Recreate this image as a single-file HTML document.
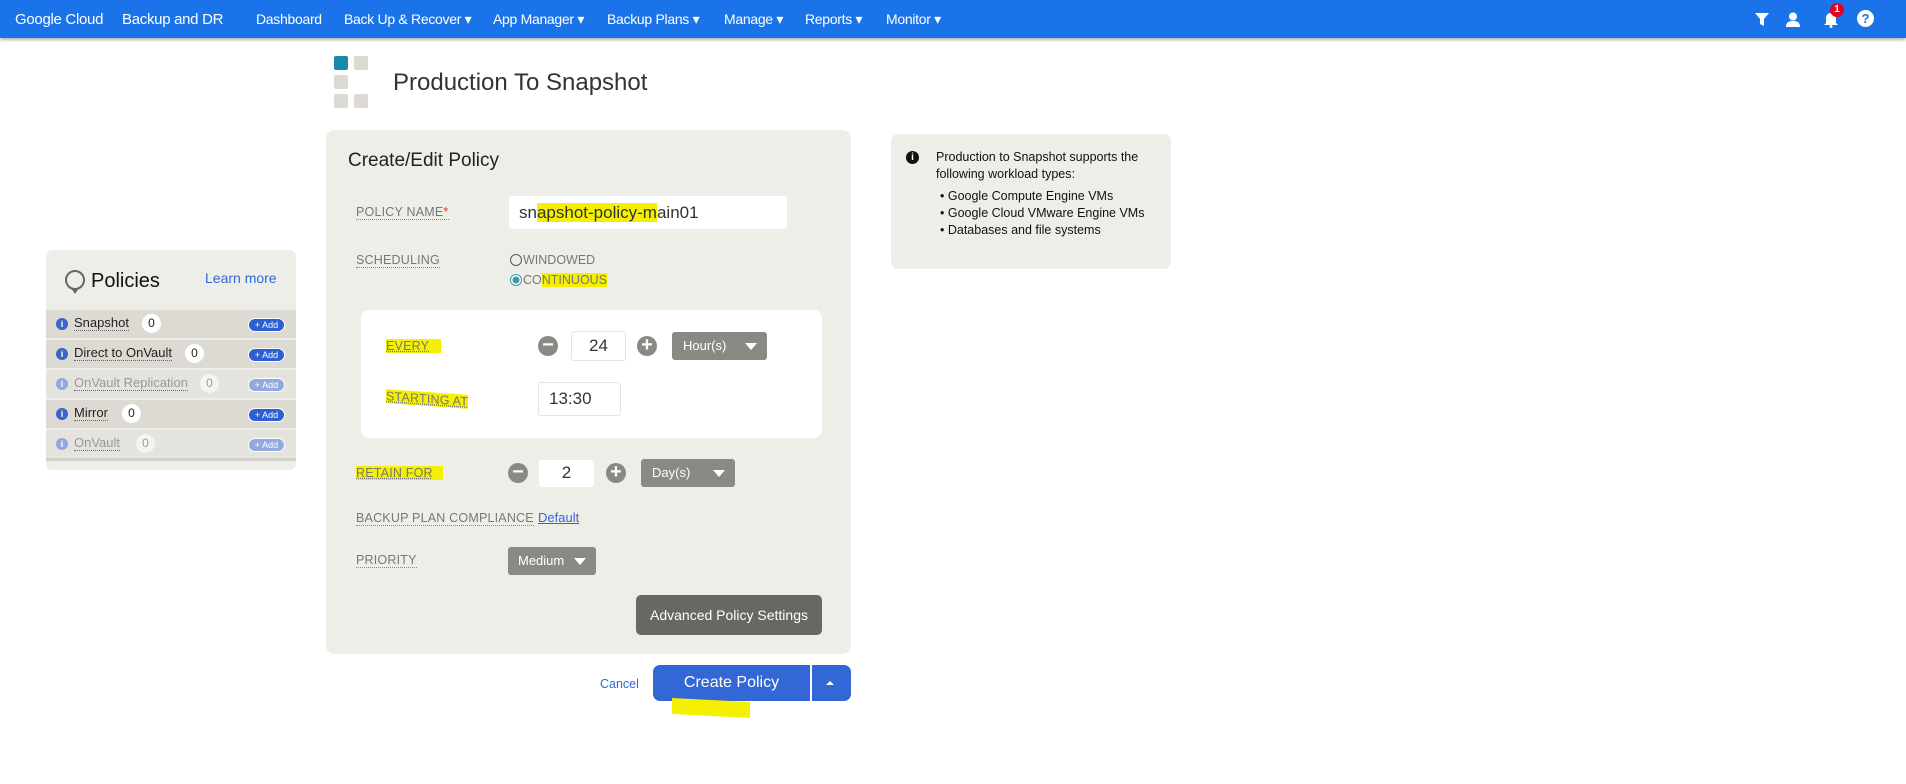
<!DOCTYPE html>
<html><head><meta charset="utf-8"><style>
*{box-sizing:border-box;margin:0;padding:0}
body{width:1906px;height:784px;background:#fff;font-family:"Liberation Sans",sans-serif;position:relative;overflow:hidden;color:#222}
.abs{position:absolute}
.nav{position:absolute;left:0;top:0;width:1906px;height:38px;background:#1a73e8;box-shadow:0 2px 3px rgba(0,0,0,.3)}
.nav span{position:absolute;top:11px;color:#fff;font-size:14px;white-space:nowrap;letter-spacing:-0.3px}
.lbl{position:absolute;font-size:12.5px;color:#777;border-bottom:1px dotted #888;line-height:14px;letter-spacing:.2px}
.hl{background:#f4f000;color:#777}
.sel{position:absolute;background:#8a8a84;color:#fff;font-size:13px;border-radius:3px;padding-left:11px}
.sel:after{content:"";position:absolute;right:10px;top:50%;margin-top:-3px;border-left:6px solid transparent;border-right:6px solid transparent;border-top:7px solid #fff}
.inp{position:absolute;background:#fff;border:1px solid #e4e4e0;border-radius:3px;font-size:17px;color:#333;text-align:center}
.circ{position:absolute;width:20px;height:20px;border-radius:50%;background:#8a8a84;color:#fff;font-size:20px;line-height:19px;text-align:center;font-weight:bold}
.row{position:absolute;left:46px;width:250px;height:28px;font-size:13px}
.row .i{position:absolute;left:10px;top:8px;width:12px;height:12px;border-radius:50%;background:#3a64c8;color:#fff;font-size:9px;text-align:center;line-height:12px;font-weight:bold}
.row .t{position:absolute;left:28px;top:6px;border-bottom:1px dotted #666;line-height:14px}
.row .c{position:absolute;top:4px;width:19px;height:19px;border-radius:50%;background:#fff;text-align:center;line-height:19px;font-size:12px}
.row .a{position:absolute;left:202px;top:8px;width:37px;height:14px;border-radius:7px;background:#2d5fd0;color:#fff;font-size:9px;text-align:center;line-height:13px;border:1px solid #fff}
.dis{color:#999}.dis .i,.dis .a{background:#93a8dc}
</style></head><body>
<div class="nav">
<span style="left:15px;font-size:15px">Google Cloud</span>
<span style="left:122px;font-size:15px">Backup and DR</span>
<span style="left:256px">Dashboard</span>
<span style="left:344px">Back Up &amp; Recover ▾</span>
<span style="left:493px">App Manager ▾</span>
<span style="left:607px">Backup Plans ▾</span>
<span style="left:724px">Manage ▾</span>
<span style="left:805px">Reports ▾</span>
<span style="left:886px">Monitor ▾</span>
<svg class="abs" style="left:1754px;top:12px" width="16" height="15"><path d="M1 1h14l-5 6v7l-4-2V7z" fill="#fff"/></svg>
<svg class="abs" style="left:1785px;top:12px" width="16" height="15"><circle cx="8" cy="4.5" r="4" fill="#fff"/><path d="M1 15c0-5 3-6 7-6s7 1 7 6z" fill="#fff"/></svg>
<svg class="abs" style="left:1823px;top:12px" width="16" height="16"><path d="M8 1c3 0 5 2 5 5v5l2 2H1l2-2V6c0-3 2-5 5-5z" fill="#fff"/><circle cx="8" cy="14.5" r="1.5" fill="#fff"/></svg>
<div class="abs" style="left:1830px;top:3px;width:14px;height:14px;border-radius:50%;background:#e8001c;color:#fff;font-size:10px;font-weight:bold;text-align:center;line-height:14px">1</div>
<div class="abs" style="left:1857px;top:10px;width:17px;height:17px;border-radius:50%;background:#fff;color:#1a73e8;font-size:13px;font-weight:bold;text-align:center;line-height:17px">?</div>
</div>

<div class="abs" style="left:334px;top:56px;width:14px;height:14px;background:#168aa6;border-radius:2px"></div>
<div class="abs" style="left:354px;top:56px;width:14px;height:14px;background:#dcdad3;border-radius:2px"></div>
<div class="abs" style="left:334px;top:75px;width:14px;height:14px;background:#dcdad3;border-radius:2px"></div>
<div class="abs" style="left:334px;top:94px;width:14px;height:14px;background:#dcdad3;border-radius:2px"></div>
<div class="abs" style="left:354px;top:94px;width:14px;height:14px;background:#dcdad3;border-radius:2px"></div>
<div class="abs" style="left:393px;top:69px;font-size:24px;color:#333">Production To Snapshot</div>

<div class="abs" style="left:46px;top:250px;width:250px;height:220px;background:#eeeee9;border-radius:6px"></div>
<svg class="abs" style="left:64px;top:270px" width="22" height="26"><circle cx="11" cy="10" r="9" fill="none" stroke="#666" stroke-width="2"/><path d="M7 18l4 6 4-6" fill="#666"/></svg>
<div class="abs" style="left:91px;top:270px;font-size:20px;color:#111">Policies</div>
<div class="abs" style="left:205px;top:270px;font-size:14px;color:#3367d6">Learn more</div>
<div class="row" style="top:310px;background:#dcdad3"><div class="i">i</div><div class="t">Snapshot</div><div class="c" style="left:96px">0</div><div class="a">+ Add</div></div>
<div class="row" style="top:340px;background:#dcdad3"><div class="i">i</div><div class="t">Direct to OnVault</div><div class="c" style="left:139px">0</div><div class="a">+ Add</div></div>
<div class="row dis" style="top:370px;background:#e4e3dd"><div class="i">i</div><div class="t">OnVault Replication</div><div class="c" style="left:154px;background:#f4f4f0">0</div><div class="a">+ Add</div></div>
<div class="row" style="top:400px;background:#dcdad3"><div class="i">i</div><div class="t">Mirror</div><div class="c" style="left:76px">0</div><div class="a">+ Add</div></div>
<div class="row dis" style="top:430px;background:#e4e3dd;border-bottom:3px solid #d2d0c9;height:31px"><div class="i">i</div><div class="t">OnVault</div><div class="c" style="left:90px;background:#f4f4f0">0</div><div class="a">+ Add</div></div>

<div class="abs" style="left:326px;top:130px;width:525px;height:524px;background:#eeeee9;border-radius:8px"></div>
<div class="abs" style="left:348px;top:150px;font-size:19px;color:#222">Create/Edit Policy</div>
<div class="lbl" style="left:356px;top:205px">POLICY NAME<span style="color:#d33">*</span></div>
<div class="inp" style="left:509px;top:196px;width:278px;height:33px;text-align:left;padding:7px 10px;font-size:17px;border:none">sn<span style="background:#f4f000">apshot-policy-m</span>ain01</div>
<div class="lbl" style="left:356px;top:253px">SCHEDULING</div>
<div class="abs" style="left:510px;top:253px;font-size:12.5px;color:#777"><span style="display:inline-block;width:12px;height:12px;border:1px solid #555;border-radius:50%;vertical-align:-2px;margin-right:1px"></span>WINDOWED</div>
<div class="abs" style="left:510px;top:273px;font-size:12.5px;color:#777"><span style="display:inline-block;width:12px;height:12px;border:1px solid #3a9ab0;border-radius:50%;vertical-align:-2px;margin-right:1px;background:radial-gradient(#3a9ab0 3px,#fff 4px)"></span>CO<span class="hl">NTINUOUS</span></div>

<div class="abs" style="left:361px;top:310px;width:461px;height:128px;background:#fff;border-radius:8px"></div>
<div class="lbl hl" style="left:386px;top:339px;padding-right:12px;border:none;text-decoration:underline dotted">EVERY</div>
<div class="circ" style="left:538px;top:336px">−</div>
<div class="inp" style="left:571px;top:331px;width:55px;height:30px;line-height:28px">24</div>
<div class="circ" style="left:637px;top:336px">+</div>
<div class="sel" style="left:672px;top:332px;width:95px;height:28px;line-height:28px">Hour(s)</div>
<div class="lbl hl" style="left:386px;top:392px;border:none;text-decoration:underline dotted;transform:skewY(4deg)">STARTING AT</div>
<div class="inp" style="left:538px;top:382px;width:83px;height:34px;line-height:32px;text-align:left;padding-left:10px">13:30</div>

<div class="lbl hl" style="left:356px;top:466px;padding-right:10px;border:none;text-decoration:underline dotted">RETAIN FOR</div>
<div class="circ" style="left:508px;top:463px">−</div>
<div class="inp" style="left:539px;top:460px;width:55px;height:27px;line-height:26px;border:none">2</div>
<div class="circ" style="left:606px;top:463px">+</div>
<div class="sel" style="left:641px;top:459px;width:94px;height:28px;line-height:28px">Day(s)</div>
<div class="lbl" style="left:356px;top:511px">BACKUP PLAN COMPLIANCE</div>
<div class="abs" style="left:538px;top:510px;font-size:13px;color:#3367d6;text-decoration:underline">Default</div>
<div class="lbl" style="left:356px;top:553px">PRIORITY</div>
<div class="sel" style="left:508px;top:547px;width:88px;height:28px;line-height:28px;padding-left:10px">Medium</div>
<div class="abs" style="left:636px;top:595px;width:186px;height:40px;background:#686862;border-radius:5px;color:#fff;font-size:14px;text-align:center;line-height:40px">Advanced Policy Settings</div>

<div class="abs" style="left:600px;top:677px;font-size:12.5px;color:#3367d6">Cancel</div>
<div class="abs" style="left:653px;top:665px;width:198px;height:36px;background:#3367d6;border-radius:7px"></div>
<div class="abs" style="left:810px;top:665px;width:2px;height:36px;background:#fff"></div>
<div class="abs" style="left:653px;top:665px;width:157px;height:36px;color:#fff;font-size:16px;text-align:center;line-height:36px">Create Policy</div>
<div class="abs" style="left:826px;top:681px;border-left:4px solid transparent;border-right:4px solid transparent;border-bottom:4px solid #fff"></div>
<div class="abs" style="left:672px;top:700px;width:78px;height:16px;background:#f4f000;transform:skewY(3deg)"></div>

<div class="abs" style="left:891px;top:134px;width:280px;height:135px;background:#eeeee9;border-radius:7px"></div>
<div class="abs" style="left:906px;top:151px;width:13px;height:13px;border-radius:50%;background:#111;color:#fff;font-size:10px;font-weight:bold;text-align:center;line-height:13px">i</div>
<div class="abs" style="left:936px;top:149px;font-size:12.5px;line-height:17px;color:#111">Production to Snapshot supports the<br>following workload types:</div>
<div class="abs" style="left:940px;top:188px;font-size:12.5px;line-height:17px;color:#111">• Google Compute Engine VMs<br>• Google Cloud VMware Engine VMs<br>• Databases and file systems</div>
</body></html>
